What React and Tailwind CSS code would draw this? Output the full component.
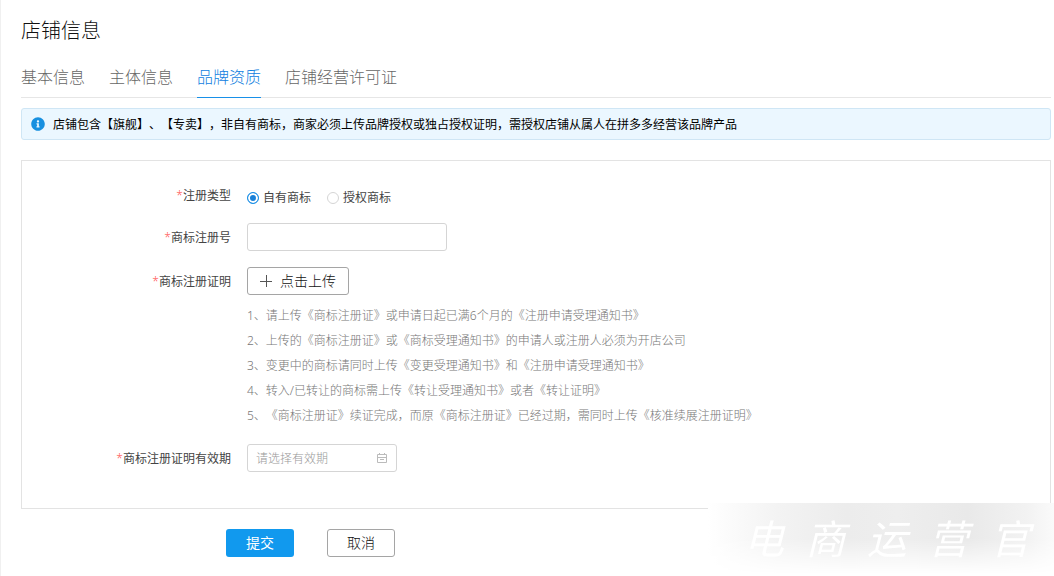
import { FaInfoCircle } from "react-icons/fa";

const tabs = ["基本信息", "主体信息", "品牌资质", "店铺经营许可证"];

const tips = [
    "1、请上传《商标注册证》或申请日起已满6个月的《注册申请受理通知书》",
    "2、上传的《商标注册证》或《商标受理通知书》的申请人或注册人必须为开店公司",
    "3、变更中的商标请同时上传《变更受理通知书》和《注册申请受理通知书》",
    "4、转入/已转让的商标需上传《转让受理通知书》或者《转让证明》",
    "5、《商标注册证》续证完成，而原《商标注册证》已经过期，需同时上传《核准续展注册证明》",
];

function Label({ htmlFor, children }) {
    return (
        <label
            htmlFor={htmlFor}
            className="w-[209px] shrink-0 text-right leading-[30px] font-normal text-[#444]"
        >
            <span className="font-light text-[#f55]">*</span>
            {children}
        </label>
    );
}

function Radio({ label, checked }) {
    return (
        <label className="flex items-center gap-1">
            <input
                type="radio"
                name="registerType"
                defaultChecked={checked}
                className="size-3 appearance-none rounded-full border border-[#d5d5d5] bg-white checked:border-[#1890e8] checked:bg-[#1880d8] checked:shadow-[inset_0_0_0_2px_#fff]"
            />
            {label}
        </label>
    );
}

function PlusIcon() {
    return (
        <svg viewBox="0 0 12 12" className="size-3" stroke="#555" fill="none">
            <path d="M6.5 0v12M0 6.5h12" />
        </svg>
    );
}

function CalendarIcon() {
    return (
        <svg viewBox="0 0 11 11" className="size-[11px]" stroke="#bbb" fill="none">
            <path d="M1.5 1.5h9v8h-9zM1 4.5h10M3.5 0v2M8.5 0v2M4 6.5h4" />
        </svg>
    );
}

function Watermark() {
    return (
        <div
            aria-hidden="true"
            className="pointer-events-none absolute right-0 bottom-0 w-[346px] bg-white pb-0.5"
        >
            <div className="flex h-[71px] items-center justify-between bg-[linear-gradient(to_right,#fff,#f3f3f3_20%,#ececec_40%,#eeeeee_55%,#e9e9e9_75%,#f2f2f2_92%,#fafafa)] pr-6 pl-9 mask-b-from-50%">
                {["电", "商", "运", "营", "官"].map((char) => (
                    <span
                        key={char}
                        className="text-[40px] leading-none font-normal text-white italic"
                    >
                        {char}
                    </span>
                ))}
            </div>
        </div>
    );
}

function App() {
    return (
        <div className="relative min-h-screen border-l border-[#f0f0f0] bg-white pr-[3px] pl-5 font-['Noto_Sans','Noto_Sans_CJK_SC',sans-serif] text-xs font-light text-[#111] [text-spacing-trim:space-all]">
            <h1 className="pt-4 text-xl leading-[30px]">店铺信息</h1>

            <nav className="mt-4 flex gap-6 border-b border-[#e6e6e6]">
                {tabs.map((tab) => (
                    <a
                        key={tab}
                        href="#"
                        className={
                            tab === "品牌资质"
                                ? "-mb-px border-b border-[#1890e8] pb-[5px] text-base leading-[30px] text-[#1080e0]"
                                : "-mb-px pb-[5px] text-base leading-[30px] text-[#666]"
                        }
                    >
                        {tab}
                    </a>
                ))}
            </nav>

            <div className="mt-[10px] flex h-8 items-center gap-2 rounded-[3px] border border-[#cfe6f5] bg-[#ebf7ff] pl-[9px] font-normal text-black">
                <FaInfoCircle className="size-[14px] text-[#1890e0]" />
                <p className="pt-0.5">
                    店铺包含【旗舰】、【专卖】，非自有商标，商家必须上传品牌授权或独占授权证明，需授权店铺从属人在拼多多经营该品牌产品
                </p>
            </div>

            <form>
                <div className="mt-5 border border-[#e3e3e3] pt-5 pb-9">
                    <div className="flex gap-4">
                        <Label>注册类型</Label>
                        <div className="flex gap-4 pt-0.5 leading-[30px] font-normal text-[#444]">
                            <Radio label="自有商标" checked />
                            <Radio label="授权商标" />
                        </div>
                    </div>
                    <div className="mt-[10px] flex h-7 gap-4">
                        <Label htmlFor="number">商标注册号</Label>
                        <input
                            id="number"
                            type="text"
                            className="h-7 w-[200px] rounded-[3px] border border-[#d5d5d5] px-2"
                        />
                    </div>
                    <div className="mt-4 flex gap-4">
                        <Label htmlFor="upload">商标注册证明</Label>
                        <div>
                            <button
                                id="upload"
                                type="button"
                                className="flex h-7 items-center gap-2 rounded-[3px] border border-[#a5a5a5] px-3 text-sm"
                            >
                                <PlusIcon />
                                点击上传
                            </button>
                            <ul className="mt-2 leading-[25px] text-[#777]">
                                {tips.map((tip) => (
                                    <li key={tip}>{tip}</li>
                                ))}
                            </ul>
                        </div>
                    </div>
                    <div className="mt-4 flex h-7 gap-4">
                        <Label htmlFor="validity">商标注册证明有效期</Label>
                        <div className="flex h-7 w-[150px] items-center rounded-[3px] border border-[#d5d5d5] pr-[9px] pl-2">
                            <input
                                id="validity"
                                type="text"
                                placeholder="请选择有效期"
                                className="min-w-0 flex-1 pt-0.5 outline-none placeholder:text-[#999]"
                            />
                            <CalendarIcon />
                        </div>
                    </div>
                </div>

                <div className="mt-5 flex gap-[33px] pl-[205px] text-sm">
                    <button
                        type="submit"
                        className="h-7 w-[68px] rounded-[3px] bg-[#1199ee] font-normal text-white"
                    >
                        提交
                    </button>
                    <button
                        type="button"
                        className="h-7 w-[68px] rounded-[3px] border border-[#a5a5a5]"
                    >
                        取消
                    </button>
                </div>
            </form>

            <Watermark />
        </div>
    );
}

export default App;
